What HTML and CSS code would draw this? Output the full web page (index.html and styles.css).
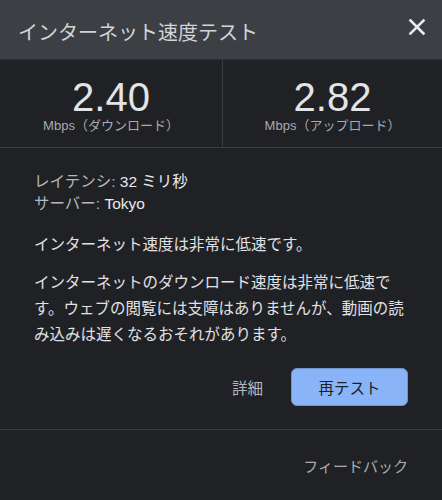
FILE: index.html
```html
<!DOCTYPE html>
<html lang="ja">
<head>
    <meta charset="UTF-8">
    <meta name="viewport" content="width=device-width, initial-scale=1.0">
    <title>インターネット速度テスト</title>
    <link rel="stylesheet" href="styles.css">
</head>
<body>
    <div class="dialog">
        <div class="head">
            <div class="title">インターネット速度テスト</div>
            <button class="close" aria-label="閉じる">
                <svg width="18" height="18" viewBox="0 0 18 18">
                    <path d="M2.5 2.5 L15.5 15.5 M15.5 2.5 L2.5 15.5" stroke="#e8eaed" stroke-width="2.6" stroke-linecap="square"/>
                </svg>
            </button>
        </div>
        <div class="speeds">
            <div class="speed">
                <div class="num">2.40</div>
                <div class="unit">Mbps（ダウンロード）</div>
            </div>
            <div class="speed">
                <div class="num">2.82</div>
                <div class="unit">Mbps（アップロード）</div>
            </div>
        </div>
        <div class="body">
            <div class="info">
                <div><span class="lbl">レイテンシ:</span> 32 ミリ秒</div>
                <div><span class="lbl">サーバー:</span> Tokyo</div>
            </div>
            <p class="msg">インターネット速度は非常に低速です。</p>
            <p class="desc">インターネットのダウンロード速度は非常に低速です。ウェブの閲覧には支障はありませんが、動画の読み込みは遅くなるおそれがあります。</p>
            <div class="actions">
                <button class="link">詳細</button>
                <button class="retest">再テスト</button>
            </div>
        </div>
        <div class="foot">
            <button class="feedback">フィードバック</button>
        </div>
    </div>
</body>
</html>
```

FILE: styles.css
```css
*{margin: 0;padding: 0;box-sizing: border-box;}
body{
    background-color: #202124;
    font-family: "Liberation Sans", "Noto Sans CJK JP", sans-serif;
    color: #e8eaed;
}
button{
    font-family: inherit;
    border: none;
    background: none;
    cursor: pointer;
}
.dialog{
    width: 442px;
    height: 500px;
    background-color: #202124;
}
.head{
    height: 60px;
    background-color: #3c3f43;
    border-bottom: 1px solid #2e3033;
    display: flex;
    justify-content: space-between;
    align-items: center;
    padding: 4px 14px 0 18px;
}
.title{
    font-size: 20px;
    color: #d2d4d7;
}
.close{
    width: 22px;
    height: 22px;
    display: flex;
    align-items: center;
    justify-content: center;
    margin-top: -9px;
}
.speeds{
    display: grid;
    grid-template-columns: 222px 1fr;
    border-bottom: 1px solid #3a3c40;
}
.speed{
    text-align: center;
    padding: 15px 0 14px;
}
.speed + .speed{
    border-left: 1px solid #3a3c40;
}
.num{
    font-size: 40px;
    line-height: 44px;
    color: #e2e4e7;
}
.unit{
    font-size: 13px;
    line-height: 14px;
    color: #a8abb0;
}
.body{
    padding: 23px 34px 23px;
    border-bottom: 1px solid #3a3c40;
    font-size: 15.5px;
}
.info{
    line-height: 22px;
    color: #e8eaed;
}
.lbl{
    color: #b4b7bc;
}
.msg{
    margin-top: 18px;
    line-height: 24px;
    color: #e0e2e5;
}
.desc{
    margin-top: 13px;
    line-height: 26px;
    color: #e0e2e5;
}
.actions{
    display: flex;
    justify-content: flex-end;
    align-items: center;
    gap: 28px;
    margin-top: 20px;
}
.link{
    font-size: 15.5px;
    color: #b4b7bc;
}
.retest{
    width: 117px;
    height: 38px;
    border-radius: 6px;
    background-color: #8ab4f8;
    border: 1px solid #6f93cc;
    color: #202124;
    font-size: 15.5px;
}
.foot{
    height: 71px;
    display: flex;
    justify-content: flex-end;
    align-items: center;
    padding: 0 34px 0 0;
}
.feedback{
    font-size: 15px;
    color: #a8abb0;
}
```
